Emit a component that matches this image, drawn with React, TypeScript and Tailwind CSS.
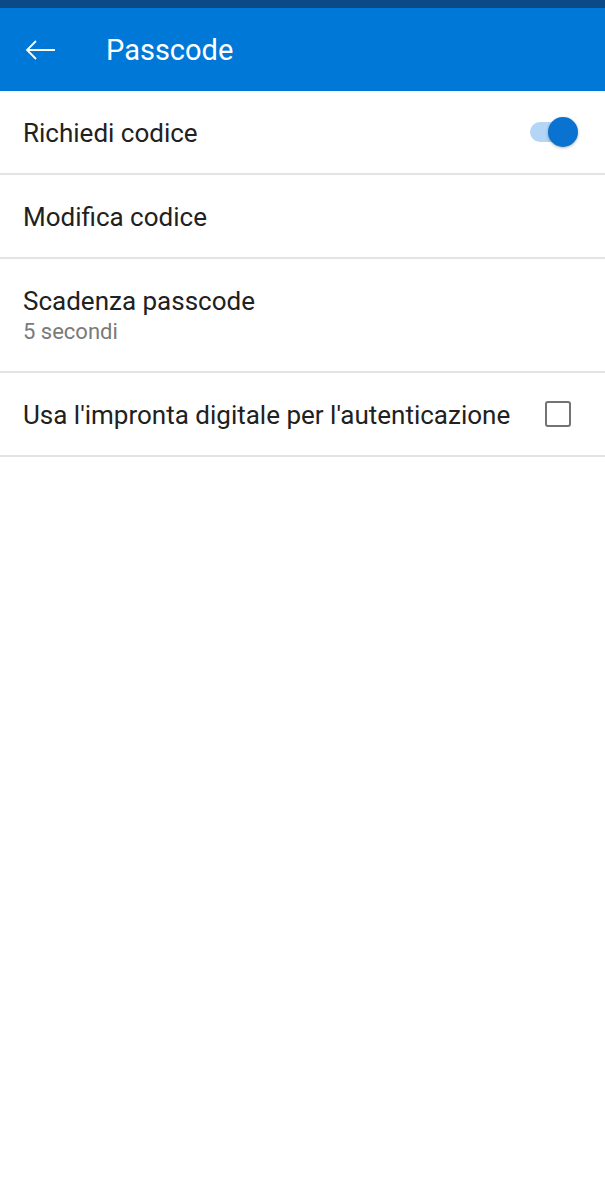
import React from 'react';

const Divider = () => <div className="h-[2px] bg-[#e3e3e3]" />;

const Toggle = () => (
  <div className="relative w-[50px] h-[32px] flex items-center">
    <div className="absolute left-[2px] right-[6px] h-[20px] rounded-full bg-[#b4d5f5]" />
    <div className="absolute right-[0px] w-[30px] h-[30px] rounded-full bg-[#0a73d1] shadow-[0_1px_3px_rgba(0,0,0,0.3)]" />
  </div>
);

const Checkbox = () => (
  <div className="w-[26px] h-[26px] border-[2.5px] border-[#737373] rounded-[3px]" />
);

const App = () => {
  return (
    <div className="min-h-[1193px] bg-white font-['Roboto',sans-serif]">
      <div className="h-[8px] bg-[#0a4a86]" />
      <div className="h-[83px] bg-[#0078d7] flex items-center">
        <svg width="34" height="24" viewBox="0 0 34 24" className="ml-[24px]" fill="none" stroke="white" strokeWidth="1.8">
          <path d="M3 12 H31 M12 3 L3 12 L12 21" />
        </svg>
        <span className="ml-[48px] text-white text-[29px] leading-none pt-[2px]">Passcode</span>
      </div>

      <div className="h-[82px] flex items-center justify-between pl-[23px] pr-[27px]">
        <span className="text-[26px] text-[#212121] pt-[2px]">Richiedi codice</span>
        <Toggle />
      </div>
      <Divider />
      <div className="h-[82px] flex items-center pl-[23px]">
        <span className="text-[26px] text-[#212121] pt-[2px]">Modifica codice</span>
      </div>
      <Divider />
      <div className="h-[112px] flex flex-col justify-center pl-[23px] pt-[2px]">
        <span className="text-[26px] text-[#212121] leading-[32px]">Scadenza passcode</span>
        <span className="text-[22px] text-[#7a7a7a] leading-[30px]">5 secondi</span>
      </div>
      <Divider />
      <div className="h-[82px] flex items-center justify-between pl-[23px] pr-[34px]">
        <span className="text-[26px] text-[#212121] pt-[2px]">Usa l'impronta digitale per l'autenticazione</span>
        <Checkbox />
      </div>
      <Divider />
    </div>
  );
};

export default App;
